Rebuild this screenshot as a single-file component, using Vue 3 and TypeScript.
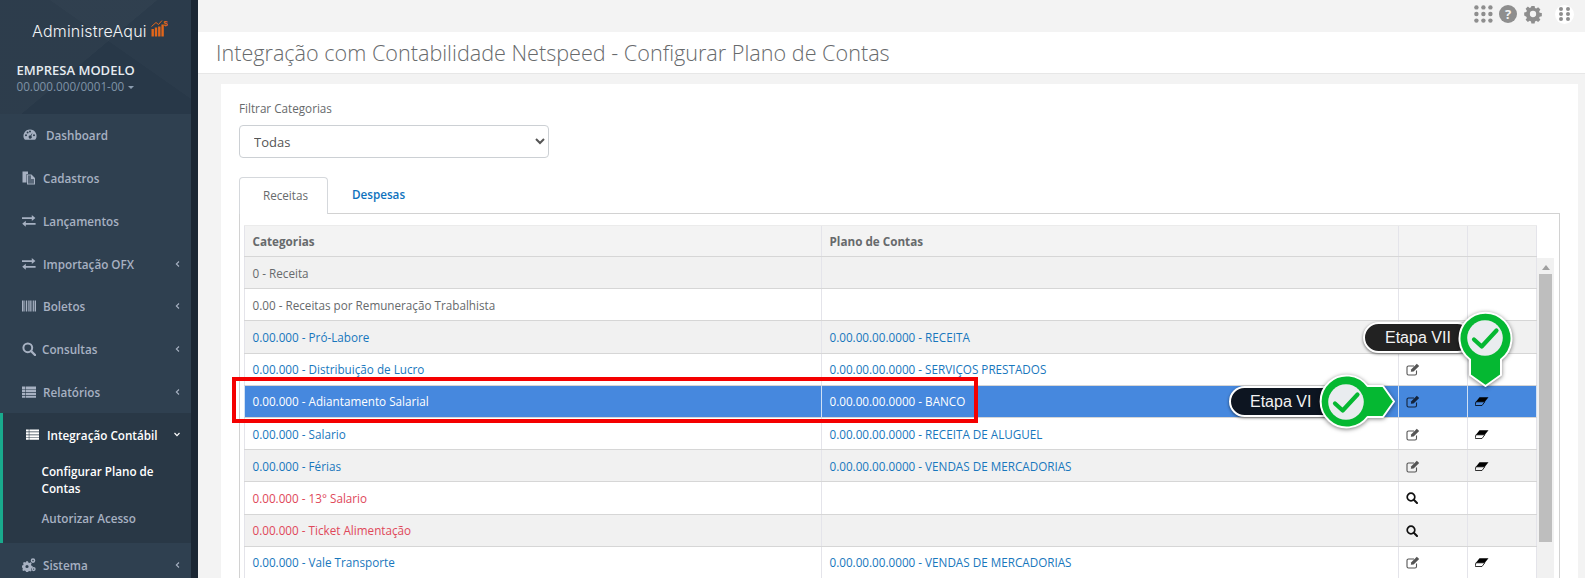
<script setup lang="ts">
interface NavItem { label: string; icon: string; chevron?: boolean; cls?: string }
interface Row { cat: string; plan: string; tone: string; action: 'edit' | 'search' | 'none'; erase: boolean; selected?: boolean }

const navTop: NavItem[] = [
  { label: 'Dashboard', icon: 'dash', cls: 'wide' },
  { label: 'Cadastros', icon: 'files' },
  { label: 'Lançamentos', icon: 'exchange' },
  { label: 'Importação OFX', icon: 'exchange', chevron: true },
  { label: 'Boletos', icon: 'barcode', chevron: true },
  { label: 'Consultas', icon: 'search', chevron: true, cls: 'tight' },
  { label: 'Relatórios', icon: 'list', chevron: true }
]

const rows: Row[] = [
  { cat: '0 - Receita', plan: '', tone: 'muted', action: 'none', erase: false },
  { cat: '0.00 - Receitas por Remuneração Trabalhista', plan: '', tone: 'muted', action: 'none', erase: false },
  { cat: '0.00.000 - Pró-Labore', plan: '0.00.00.00.0000 - RECEITA', tone: 'link', action: 'edit', erase: true },
  { cat: '0.00.000 - Distribuição de Lucro', plan: '0.00.00.00.0000 - SERVIÇOS PRESTADOS', tone: 'link', action: 'edit', erase: true },
  { cat: '0.00.000 - Adiantamento Salarial', plan: '0.00.00.00.0000 - BANCO', tone: 'link', action: 'edit', erase: true, selected: true },
  { cat: '0.00.000 - Salario', plan: '0.00.00.00.0000 - RECEITA DE ALUGUEL', tone: 'link', action: 'edit', erase: true },
  { cat: '0.00.000 - Férias', plan: '0.00.00.00.0000 - VENDAS DE MERCADORIAS', tone: 'link', action: 'edit', erase: true },
  { cat: '0.00.000 - 13° Salario', plan: '', tone: 'alert', action: 'search', erase: false },
  { cat: '0.00.000 - Ticket Alimentação', plan: '', tone: 'alert', action: 'search', erase: false },
  { cat: '0.00.000 - Vale Transporte', plan: '0.00.00.00.0000 - VENDAS DE MERCADORIAS', tone: 'link', action: 'edit', erase: true }
]

const callouts = [
  { label: 'Etapa VII', cls: 'vii', view: '0 0 60 84', turn: '' },
  { label: 'Etapa VI', cls: 'vi', view: '0 0 84 60', turn: 'rotate(-90 30 30)' }
]
const dots = [0, 1, 2]
</script>

<template>
  <div class="app">
    <aside class="sidebar">
      <header class="brand">
        <div class="logo">
          <span>AdministreAqui</span>
          <svg class="logo-mark" viewBox="0 0 17 18" width="17" height="18">
            <rect x="0.5" y="10" width="2.4" height="7.5" fill="#e2661b" />
            <rect x="3.8" y="8.5" width="2.4" height="9" fill="#e2661b" />
            <rect x="7.1" y="7.5" width="2.4" height="10" fill="#e2661b" />
            <rect x="10.4" y="5.5" width="2.4" height="12" fill="#e2661b" />
            <path d="M0.5 7.5 L5 3.5 L7.5 5.5 L11 1.5" fill="none" stroke="#e2661b" stroke-width="1" />
            <text x="12.2" y="6.6" font-size="8" font-weight="700" fill="#e2661b" font-family="Liberation Sans, sans-serif">$</text>
          </svg>
        </div>
        <div class="company">EMPRESA MODELO</div>
        <div class="cnpj">00.000.000/0001-00 <i class="caret"></i></div>
      </header>

      <nav class="nav">
        <a v-for="item in navTop" :key="item.label" class="nav-item" :class="item.cls">
          <svg class="nav-icon" viewBox="0 0 14 14" width="14" height="14">
            <g v-if="item.icon === 'dash'" fill="currentColor">
              <path fill-rule="evenodd" d="M7 1.5a6.5 6.5 0 0 1 5.6 9.8c-.2.3-.5.5-.9.5H2.3c-.4 0-.7-.2-.9-.5A6.5 6.5 0 0 1 7 1.5zM3 6.2a1 1 0 1 0 0 2 1 1 0 0 0 0-2zM4.6 3.4a1 1 0 1 0 0 2 1 1 0 0 0 0-2zM7 2.6a1 1 0 1 0 0 2 1 1 0 0 0 0-2zM11 6.2a1 1 0 1 0 0 2 1 1 0 0 0 0-2zM9.6 4.4 7.4 7.6a1.5 1.5 0 1 0 .9.5z" />
            </g>
            <g v-else-if="item.icon === 'files'" fill="currentColor">
              <path d="M0.5 0.5h5.5v2.5h-1.5v8.5h-4z" />
              <path fill-rule="evenodd" d="M5 3.5h4.5l3.5 3.5v6.5H5zM6 4.5v8h6V8H9V4.5z" />
              <path d="M6 4.5h3V8h3v4.5H6z" opacity="0.35" />
            </g>
            <g v-else-if="item.icon === 'exchange'" fill="currentColor">
              <path d="M0 3.8h9.8V1.6l3.6 3-3.6 3V5.500H0z" transform="translate(0 -0.6)" />
              <path d="M14 9.200H4.200V7l-3.600 3 3.600 3v-2.100H14z" transform="translate(-0.4 -0.2)" />
            </g>
            <g v-else-if="item.icon === 'barcode'" fill="currentColor">
              <path d="M0 1.5h1.6v11H0zM2.4 1.5h.8v11h-.8zM4 1.5h1.2v11H4zM6 1.5h.7v11H6zM7.4 1.5h1.4v11H7.4zM9.5 1.5h.7v11h-.7zM10.9 1.5h1v11h-1zM12.6 1.5H14v11h-1.4z" />
            </g>
            <g v-else-if="item.icon === 'search'">
              <circle cx="5.8" cy="5.8" r="4.4" fill="none" stroke="currentColor" stroke-width="2" />
              <path d="M9 9l4 4" stroke="currentColor" stroke-width="2.4" stroke-linecap="round" />
            </g>
            <g v-else fill="currentColor">
              <path d="M0 1.5h3v2.4H0zM3.6 1.5H14v2.4H3.6zM0 4.6h3V7H0zM3.6 4.6H14V7H3.6zM0 7.7h3v2.4H0zM3.6 7.7H14v2.4H3.6zM0 10.8h3v1.9H0zM3.6 10.8H14v1.9H3.6z" />
            </g>
          </svg>
          <span class="nav-label">{{ item.label }}</span>
          <svg v-if="item.chevron" class="chev" viewBox="0 0 6 8" width="5" height="8"><path d="M4.8 1 1.6 4l3.2 3" fill="none" stroke="currentColor" stroke-width="1.3" /></svg>
        </a>

        <section class="nav-active">
          <a class="nav-item current">
            <svg class="nav-icon" viewBox="0 0 14 14" width="13" height="13">
              <path fill="currentColor" d="M0 1.5h3v2.4H0zM3.6 1.5H14v2.4H3.6zM0 4.6h3V7H0zM3.6 4.6H14V7H3.6zM0 7.7h3v2.4H0zM3.6 7.7H14v2.4H3.6zM0 10.8h3v1.9H0zM3.6 10.8H14v1.9H3.6z" />
            </svg>
            <span class="nav-label">Integração Contábil</span>
            <svg class="chev down" viewBox="0 0 8 6" width="8" height="5"><path d="M1 1.2 4 4.4l3-3.2" fill="none" stroke="currentColor" stroke-width="1.4" /></svg>
          </a>
          <a class="sub strong">Configurar Plano de Contas</a>
          <a class="sub">Autorizar Acesso</a>
        </section>

        <a class="nav-item">
          <svg class="nav-icon" viewBox="0 0 14 14" width="14" height="14">
            <g fill="currentColor">
              <path fill-rule="evenodd" d="M4 3.2h2l.3 1.2 1.2.5 1.1-.6 1.1 1.3-.7 1 .4 1.2 1.2.3v1.8l-1.2.3-.4 1.2.7 1-1.3 1.2-1-.7-1.2.5L6 14H4l-.3-1.1-1.2-.5-1 .7L.2 11.9l.7-1-.5-1.2L0 9.4V7.6l1.1-.3.5-1.2-.7-1L2.2 3.9l1 .7 1-.5zM5 6.9a1.6 1.6 0 1 0 0 3.2 1.6 1.6 0 0 0 0-3.2z" />
              <path fill-rule="evenodd" d="M11 .3a2.3 2.3 0 1 1 0 4.6 2.3 2.3 0 0 1 0-4.6zm0 1.5a.8.8 0 1 0 0 1.6.8.8 0 0 0 0-1.6z" />
              <path fill-rule="evenodd" d="M11.6 9a2.1 2.1 0 1 1 0 4.2 2.1 2.1 0 0 1 0-4.2zm0 1.4a.7.7 0 1 0 0 1.4.7.7 0 0 0 0-1.4z" />
            </g>
          </svg>
          <span class="nav-label">Sistema</span>
          <svg class="chev" viewBox="0 0 6 8" width="5" height="8"><path d="M4.8 1 1.6 4l3.2 3" fill="none" stroke="currentColor" stroke-width="1.3" /></svg>
        </a>
      </nav>
    </aside>

    <main class="main">
      <div class="topbar">
        <svg viewBox="0 0 19 18" width="19" height="18" class="top-grid">
          <template v-for="y in dots" :key="y">
            <circle v-for="x in dots" :key="x" :cx="2.4 + x * 7" :cy="2.4 + y * 6.6" r="2.2" fill="#8e8e8e" />
          </template>
        </svg>
        <span class="help">?</span>
        <svg viewBox="0 0 20 20" width="20" height="20" class="gear">
          <path fill="#8e8e8e" fill-rule="evenodd" d="M8.200 1h3.600l.4 2.400 1.500.6 2-1.400 2.500 2.500-1.400 2 .6 1.500 2.400.4v3.600l-2.400.4-.6 1.500 1.400 2-2.500 2.500-2-1.400-1.500.6-.4 2.400H8.200l-.4-2.400-1.500-.6-2 1.400-2.500-2.500 1.400-2-.6-1.500L.200 11.800V8.200l2.400-.4.6-1.500-1.400-2 2.500-2.500 2 1.400 1.500-.6zM10 6.500a3.500 3.500 0 1 0 0 7 3.500 3.500 0 0 0 0-7z" transform="translate(1 1) scale(.9)" />
        </svg>
        <span class="apps">
          <i v-for="n in 6" :key="n"></i>
        </span>
      </div>

      <div class="title-bar"><h1>Integração com Contabilidade Netspeed - Configurar Plano de Contas</h1></div>

      <section class="card">
        <label class="field-label" for="filtro">Filtrar Categorias</label>
        <select id="filtro" class="field"><option>Todas</option></select>

        <div class="tabs">
          <a class="tab active">Receitas</a>
          <a class="tab">Despesas</a>
        </div>

        <div class="panel">
          <div class="table">
            <div class="tr head">
              <div class="td">Categorias</div>
              <div class="td">Plano de Contas</div>
              <div class="td"></div>
              <div class="td"></div>
            </div>
            <div v-for="row in rows" :key="row.cat" class="tr" :class="[row.tone, { selected: row.selected }]">
              <div class="td">{{ row.cat }}</div>
              <div class="td">{{ row.plan }}</div>
              <div class="td ico">
                <svg v-if="row.action === 'edit'" viewBox="0 0 14 13" width="14" height="13">
                  <path d="M10.500 7.500V10.500a1.500 1.500 0 0 1-1.500 1.500H2.500A1.500 1.500 0 0 1 1 10.500V4.500A1.500 1.500 0 0 1 2.500 3H8" fill="none" stroke="currentColor" stroke-width="1.100" />
                  <path d="M4.800 8.800 5.300 6.300 10.800.8 13.200 3 7.600 8.400z" fill="currentColor" />
                </svg>
                <svg v-else-if="row.action === 'search'" viewBox="0 0 12 12" width="12" height="12">
                  <circle cx="5" cy="5" r="3.800" fill="none" stroke="#111" stroke-width="1.700" />
                  <path d="M7.800 7.800 11 11" stroke="#111" stroke-width="2" stroke-linecap="round" />
                </svg>
              </div>
              <div class="td ico">
                <svg v-if="row.erase" viewBox="0 0 14 9" width="14" height="9">
                  <path d="M4.500.3H13.500L9.800 4.800H.9z" fill="#000" />
                  <path d="M.9 4.800H9.800L7 8.500H.4C.2 8.500.1 8.300.2 8.100z" fill="none" stroke="#000" stroke-width=".8" />
                </svg>
              </div>
            </div>
          </div>
          <div class="scrollbar">
            <i class="arrow"></i>
            <i class="thumb"></i>
          </div>
        </div>
      </section>
    </main>

    <div class="red-box"></div>

    <template v-for="c in callouts" :key="c.label">
      <div class="pill" :class="c.cls">{{ c.label }}</div>
      <svg class="marker" :class="c.cls" :viewBox="c.view">
        <g :transform="c.turn">
          <path d="M15 51.500A26 26 0 1 1 46 51.500V67L30.500 78 15 67z" fill="#05b832" stroke="#fff" stroke-width="2" stroke-linejoin="round" />
        </g>
        <circle cx="30" cy="30" r="17.800" fill="#e9ecef" />
        <path d="M19 31.500 26.700 38.500 41.500 22.500" fill="none" stroke="#05b832" stroke-width="4.200" stroke-linecap="round" stroke-linejoin="round" />
      </svg>
    </template>
  </div>
</template>

<style>
html, body { margin: 0; height: 100%; overflow: hidden; }
</style>

<style scoped>
.app {
  position: relative;
  display: flex;
  width: 100vw;
  height: 100vh;
  overflow: hidden;
  background: #f3f3f3;
  font-family: "Open Sans", "Liberation Sans", sans-serif;
  font-size: 11.700px;
  color: #676a6c;
}
a { text-decoration: none; }

/* Sidebar */
.sidebar {
  flex: 0 0 191px;
  border-right: 7px solid #1b2734;
  background: #2f4050;
}
.brand {
  height: 114px;
  box-sizing: border-box;
  padding: 20px 0 0 16.500px;
  background:
    linear-gradient(140deg, rgba(255,255,255,.025) 0 48%, transparent 48.2%),
    linear-gradient(35deg, transparent 60%, rgba(255,255,255,.015) 60.2%),
    #283848;
}
.logo {
  display: flex;
  align-items: center;
  gap: 4px;
  margin-left: 15.500px;
  height: 21px;
  font-family: "Inter", sans-serif;
  font-weight: 300;
  font-size: 16px;
  letter-spacing: .2px;
  color: #f2f4f6;
}
.logo-mark { margin-top: -5px; }
.company {
  margin-top: 22px;
  font-weight: 600;
  font-size: 13px;
  line-height: 15px;
  color: #e6ebf0;
}
.cnpj {
  font-size: 11.700px;
  line-height: 16px;
  color: #7f92a6;
}
.caret {
  display: inline-block;
  margin-left: 1px;
  vertical-align: 2px;
  border: 3.500px solid transparent;
  border-top-color: #8c9db0;
  border-bottom: 0;
}
.nav { display: flex; flex-direction: column; }
.nav-item {
  display: flex;
  align-items: center;
  height: 42.750px;
  flex: 0 0 42.750px;
  padding: 0 11px 0 22px;
  box-sizing: border-box;
  font-weight: 600;
  color: #a7b1c2;
}
.nav-icon { flex: 0 0 auto; margin-right: 7px; color: #a7b1c2; }
.nav-item.wide { padding-left: 23px; }
.nav-item.wide .nav-icon { margin-right: 9px; }
.nav-item.tight .nav-icon { margin-right: 6px; }
.nav-label { flex: 1; }
.chev { color: #a7b1c2; }
.nav-active {
  border-left: 3px solid #19aa8d;
  height: 130px;
  box-sizing: border-box;
  background: #293846;
}
.nav-item.current {
  padding: 0 10px 0 23px;
  color: #fff;
}
.nav-item.current .nav-icon { color: #fff; margin-right: 8px; }
.chev.down { color: #fff; }
.sub {
  display: block;
  padding: 0 20px 0 38.500px;
  line-height: 17px;
  font-weight: 600;
  color: #a7b1c2;
}
.sub.strong { color: #fff; margin: 7px 0 13px; }

/* Main */
.main { flex: 1; display: flex; flex-direction: column; min-width: 0; }
.topbar {
  flex: 0 0 32px;
  display: flex;
  align-items: center;
  padding: 0 11px 4px 0;
  box-sizing: border-box;
  justify-content: flex-end;
}
.top-grid { margin-right: 6px; }
.help {
  width: 18px;
  height: 18px;
  line-height: 18px;
  border-radius: 50%;
  background: #8e8e8e;
  color: #f3f3f3;
  font-weight: 700;
  font-size: 13px;
  text-align: center;
}
.gear { margin: 0 12px 0 6px; }
.apps {
  width: 19px;
  height: 19px;
  border-radius: 50%;
  background: #fff;
  display: grid;
  grid-template-columns: 4px 4px;
  grid-auto-rows: 4px;
  gap: 1px 3px;
  justify-content: center;
  align-content: center;
}
.apps i { background: #8e8e8e; border-radius: 50%; }
.title-bar {
  flex: 0 0 42px;
  box-sizing: border-box;
  background: #fff;
  border-bottom: 1px solid #e7e7e7;
  padding-left: 18px;
}
h1 {
  margin: 0;
  font-weight: 300;
  font-size: 21.600px;
  line-height: 41px;
  color: #676a6c;
}
.card {
  flex: 1;
  margin: 10px 7px 0 23px;
  padding: 15px 18px 0 18px;
  background: #fff;
  display: flex;
  flex-direction: column;
  align-items: flex-start;
}
.field-label { line-height: 18px; color: #676a6c; }
.field {
  width: 310px;
  height: 33px;
  margin-top: 8px;
  padding: 0 10px;
  background: #fff;
  border: 1px solid #ccd0d4;
  border-radius: 4px;
  font: 13px "Open Sans", sans-serif;
  color: #555;
}
.tabs {
  display: flex;
  align-self: stretch;
  margin-top: 19px;
  height: 36px;
}
.tab {
  width: 89px;
  box-sizing: border-box;
  padding-left: 4px;
  line-height: 34px;
  text-align: center;
  font-weight: 600;
  color: #0e72bd;
}
.tab.active {
  position: relative;
  z-index: 1;
  height: 37px;
  background: #fff;
  color: #676a6c;
  font-weight: 400;
  border: 1px solid #d5d8dc;
  border-bottom: 0;
  border-radius: 4px 4px 0 0;
}
.tab + .tab { margin-left: 4px; }
.panel {
  align-self: stretch;
  flex: 1;
  display: flex;
  align-items: flex-start;
  padding: 11px 5px 0 4px;
  border: 1px solid #d2d2d2;
  border-bottom: 0;
}
.table { flex: 0 0 1293px; }
.tr {
  display: grid;
  grid-template-columns: 578px 577px 69px 69px;
  height: 32.200px;
  box-sizing: border-box;
  border-bottom: 1px solid #d6d6d6;
  background: #fff;
}
.tr:nth-child(even) { background: #f1f1f1; }
.td {
  display: flex;
  align-items: center;
  padding: 0 7.500px;
  border-right: 1px solid #e4e4ea;
  white-space: nowrap;
}
.td:first-child { border-left: 1px solid #e4e4ea; }
.ico { padding: 1px 0 0 7px; }
.head {
  background: #f3f3f3 !important;
  font-weight: 700;
  border-top: 1px solid #ebebeb;
  height: 32px;
}
.muted { color: #676a6c; }
.link { color: #1877bd; }
.alert { color: #e0485a; }
.link .ico { color: #555; }
.tr.selected {
  background: #4688de !important;
  color: #fff;
  font-weight: 500;
}
.tr.selected .td { border-color: #cfe0f5; }
.tr.selected .ico { color: #14233a; }
.scrollbar {
  flex: 0 0 17px;
  align-self: stretch;
  margin-top: 33px;
  box-sizing: border-box;
  background: #f1f1f1;
  padding: 0 2px;
  display: flex;
  flex-direction: column;
  align-items: center;
}
.arrow {
  margin: 7px 0 4px;
  flex: 0 0 auto;
  border: 4px solid transparent;
  border-bottom: 5px solid #a0a0a0;
  border-top: 0;
}
.thumb { width: 13px; height: 268px; background: #bebebe; }

/* Overlays */
.red-box {
  position: absolute;
  left: 232px;
  top: 377px;
  width: 746px;
  height: 46px;
  box-sizing: border-box;
  border: 4px solid #f40000;
  pointer-events: none;
}
.pill {
  position: absolute;
  box-sizing: border-box;
  height: 31px;
  line-height: 27px;
  border: 2px solid #fff;
  border-radius: 16px;
  font-family: "Liberation Sans", Arial, sans-serif;
  font-size: 16px;
  color: #f2f2f2;
  box-shadow: 0 1px 3px rgba(0,0,0,.55);
}
.pill.vii { left: 1363px; top: 322px; width: 110px; padding-left: 20px; background: #222; }
.pill.vi { left: 1229px; top: 386px; width: 110px; padding-left: 19px; background: #0d1521; }
.marker {
  position: absolute;
  overflow: visible;
  filter: drop-shadow(0 1px 2px rgba(0,0,0,.5));
}
.marker.vii { left: 1455px; top: 308px; width: 60px; height: 84px; }
.marker.vi { left: 1316px; top: 372px; width: 84px; height: 60px; }
</style>
